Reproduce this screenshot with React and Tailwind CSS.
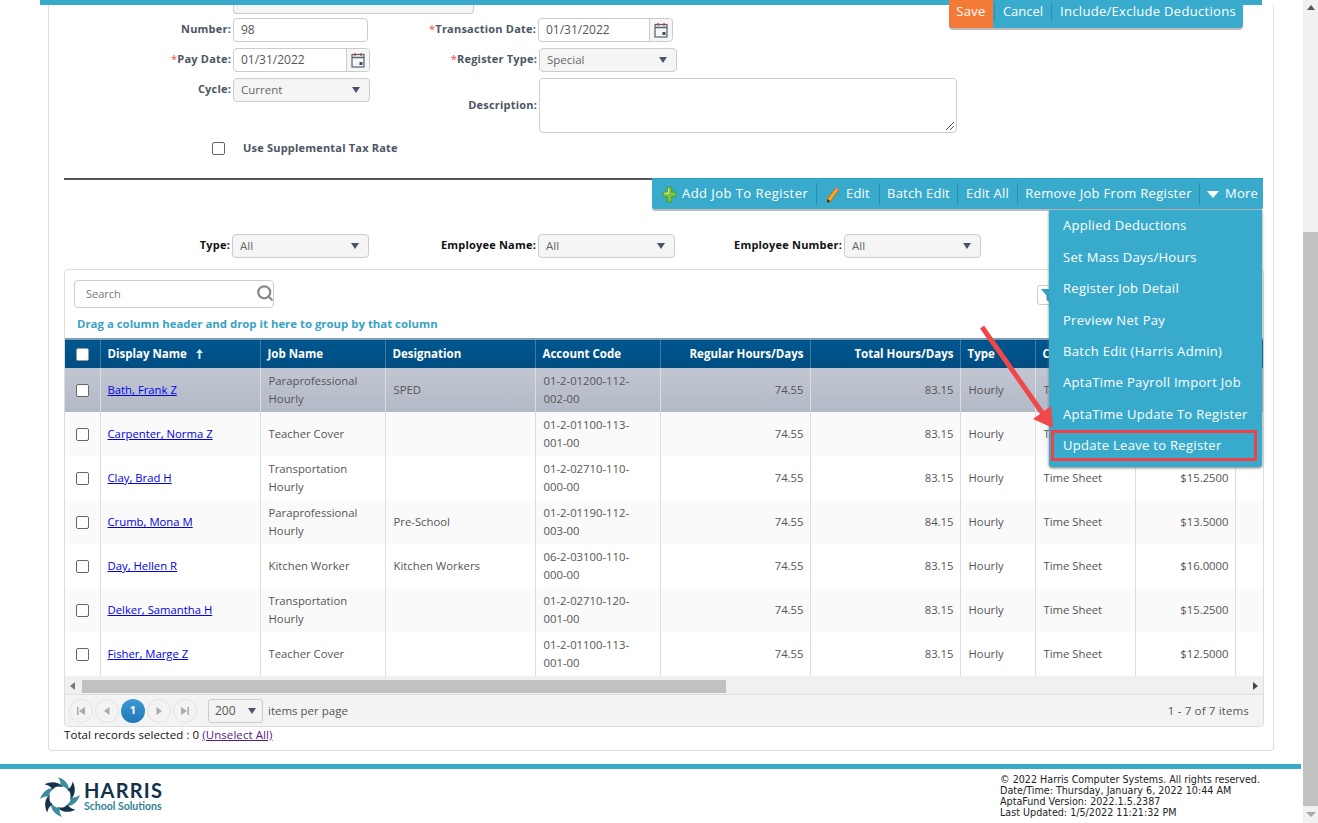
import { Search } from "lucide-react";

const rows = [
  { name: "Bath, Frank Z", job: "Paraprofessional Hourly", des: "SPED", acct: "01-2-01200-112-002-00", reg: "74.55", total: "83.15", rate: "" },
  { name: "Carpenter, Norma Z", job: "Teacher Cover", des: "", acct: "01-2-01100-113-001-00", reg: "74.55", total: "83.15", rate: "" },
  { name: "Clay, Brad H", job: "Transportation Hourly", des: "", acct: "01-2-02710-110-000-00", reg: "74.55", total: "83.15", rate: "$15.2500" },
  { name: "Crumb, Mona M", job: "Paraprofessional Hourly", des: "Pre-School", acct: "01-2-01190-112-003-00", reg: "74.55", total: "84.15", rate: "$13.5000" },
  { name: "Day, Hellen R", job: "Kitchen Worker", des: "Kitchen Workers", acct: "06-2-03100-110-000-00", reg: "74.55", total: "83.15", rate: "$16.0000" },
  { name: "Delker, Samantha H", job: "Transportation Hourly", des: "", acct: "01-2-02710-120-001-00", reg: "74.55", total: "83.15", rate: "$15.2500" },
  { name: "Fisher, Marge Z", job: "Teacher Cover", des: "", acct: "01-2-01100-113-001-00", reg: "74.55", total: "83.15", rate: "$12.5000" },
];

const menu = [
  "Applied Deductions",
  "Set Mass Days/Hours",
  "Register Job Detail",
  "Preview Net Pay",
  "Batch Edit (Harris Admin)",
  "AptaTime Payroll Import Job",
  "AptaTime Update To Register",
];

function Caret() {
  return <span className="w-0 h-0 border-x-[4px] border-x-transparent border-t-[6px] border-t-[#4a5568]" />;
}

function Calendar() {
  return (
    <svg width="14" height="16" viewBox="0 0 14 16" fill="none">
      <rect x="1" y="2.5" width="12" height="12.5" stroke="#56606e" strokeWidth="1.2" />
      <path d="M1 5.5h12" stroke="#56606e" strokeWidth="1.5" />
      <path d="M4 1v3M10 1v3" stroke="#c0504d" strokeWidth="1.4" />
      <rect x="8.5" y="10" width="3" height="3" fill="#3f4a58" />
    </svg>
  );
}

function Label({ children, req, w, black }) {
  return (
    <label className={`flex justify-end shrink-0 whitespace-nowrap font-bold text-[11px] tracking-[0.2px] leading-6 -mt-[1px] h-6 ${black ? "text-[#111]" : "text-[#4b5563]"} ${w || ""}`}>
      {req && <span className="text-[#ef4444] font-normal">*</span>}
      {children}
    </label>
  );
}

function Text({ value, w }) {
  return <div className={`h-6 ${w} border border-[#ccc] rounded-[4px] bg-white px-[7px] text-[12px] leading-[22px] text-[#555]`}>{value}</div>;
}

function DateBox({ value, w }) {
  return (
    <div className={`h-6 ${w} flex border border-[#ccc] rounded-[4px] bg-white text-[12px] leading-[22px] text-[#555]`}>
      <div className="flex-1 px-[7px]">{value}</div>
      <div className="w-[23px] flex items-center justify-center border-l border-[#ccc] bg-[#f6f6f6] rounded-r-[4px]"><Calendar /></div>
    </div>
  );
}

function Select({ value, w = "w-[137px]" }) {
  return (
    <div className={`h-6 ${w} flex items-center justify-between border border-[#ccc] rounded-[4px] bg-[#f5f5f5] pl-[7px] pr-[9px] text-[11.5px] text-[#666]`}>
      <span>{value}</span>
      <Caret />
    </div>
  );
}

function Sep() {
  return <span className="w-px h-[22px] bg-[#2c8fae]" />;
}

function Plus() {
  return (
    <svg width="15" height="17" viewBox="0 0 15 17">
      <path d="M5.2 1h4.6v5h4.2v4.6H9.800v5.400H5.200v-5.400H1V6h4.200z" fill="#7cc242" stroke="#4f9a2a" strokeWidth="1" />
      <path d="M6.500 2.500v4.800H2.500" fill="none" stroke="#c4ea9c" strokeWidth="1.200" />
    </svg>
  );
}

function Pencil() {
  return (
    <svg width="14" height="17" viewBox="0 0 14 17">
      <path d="M10 1.500l3 2L5 15l-3.800 1.500L1.500 12.500z" fill="#f5a623" stroke="#a8641a" strokeWidth="0.800" />
      <path d="M10 1.500l3 2-1 1.500-3-2z" fill="#e58a8a" />
      <path d="M1.500 13l-.3 3.500 3-1.200z" fill="#222" />
    </svg>
  );
}

function PagerBtn({ d }) {
  return (
    <span className="w-[24px] h-[24px] rounded-full border border-[#e2e2e2] flex items-center justify-center">
      <svg width="10" height="10" viewBox="0 0 10 10" fill="#aaa"><path d={d} /></svg>
    </span>
  );
}

function Logo() {
  const blades = [0, 45, 90, 135, 180, 225, 270, 315];
  return (
    <svg width="40" height="40" viewBox="-20 -20 40 40">
      {blades.map((a, i) => (
        <path
          key={a}
          transform={`rotate(${a})`}
          d="M-2 -20 C4 -18 10 -13 9 -5 C7 -9 4 -11 0 -11 C1 -14 0 -17 -2 -20z"
          fill={i % 2 ? "#14324a" : "#3d8b9e"}
        />
      ))}
    </svg>
  );
}

export default function App() {
  return (
    <div className="relative flex h-[823px] overflow-hidden bg-white font-['Open_Sans',sans-serif] text-[12px] text-[#555]">
      <div className="w-[1301px] shrink-0 flex flex-col">
        <div className="ml-10 w-[1222px] h-[5px] shrink-0 bg-[#38abcd]" />

        <div className="relative ml-12 w-[1226px] h-[746px] shrink-0 border-x border-b border-[#ddd] rounded-b-[4px] pl-[15px] pr-[9px]">
          <div className="absolute -top-[5px] left-[900px] flex items-stretch h-[28px] pb-[5px] text-[13px] tracking-[0.3px] text-white bg-[#38abcd] rounded-b-[4px] shadow-[0_2px_0_#bbb]">
            <span className="-mb-[5px] pb-[5px] w-[44px] flex items-center justify-center bg-[#f47a38] rounded-bl-[4px]">Save</span>
            <span className="w-[58px] flex items-center justify-center border-x border-[#2c8fae] ml-px my-[2px] tracking-normal">Cancel</span>
            <span className="w-[191px] flex items-center justify-center pl-[1px]">Include/Exclude Deductions</span>
          </div>

          <div className="-ml-[15px]">
            <div className="ml-[184px] w-[241px] h-[9px] border-x border-b border-[#ccc] rounded-b-[4px] bg-[#f5f5f5]" />

            <div className="flex mt-1">
              <Label w="w-[182px] mr-[2px]">Number:</Label>
              <div className="flex justify-between w-[305px]">
                <Text value="98" w="w-[135px]" />
                <Label req w="pr-[2px]">Transaction Date:</Label>
              </div>
              <DateBox value="01/31/2022" w="w-[135px]" />
            </div>

            <div className="flex mt-[6px]">
              <Label req w="w-[182px] mr-[2px]">Pay Date:</Label>
              <div className="flex justify-between w-[306px]">
                <DateBox value="01/31/2022" w="w-[137px]" />
                <Label req w="pr-[2px]">Register Type:</Label>
              </div>
              <Select value="Special" w="w-[138px]" />
            </div>

            <div className="flex h-[55px] mt-[6px]">
              <Label w="w-[182px] mr-[2px]">Cycle:</Label>
              <div className="flex justify-between w-[306px]">
                <Select value="Current" />
                <div className="self-center"><Label w="pr-[2px]">Description:</Label></div>
              </div>
              <div className="relative w-[418px] border border-[#ccc] rounded-[4px]">
                <svg className="absolute right-[1px] bottom-[1px]" width="10" height="10" viewBox="0 0 10 10" stroke="#555" strokeWidth="1">
                  <path d="M1 9l8-8M5 9l4-4" />
                </svg>
              </div>
            </div>

            <div className="flex items-center h-[13px] mt-[9px] ml-[163px]">
              <span className="w-[13px] h-[13px] border border-[#666] rounded-[2px] bg-white" />
              <span className="ml-[18px] font-bold text-[11px] tracking-[0.2px] text-[#4b5563]">Use Supplemental Tax Rate</span>
            </div>
          </div>

          <div className="flex h-[31px] mt-[23px] mr-[1px]">
            <div className="flex-1 h-[2px] bg-[#555]" />
            <div className="relative w-[611px] flex items-center text-[13px] tracking-[0.2px] text-white bg-[#38abcd] rounded-b-[3px] shadow-[0_2px_0_#bbb] border-t border-[#2c9fc2]">
              <span className="ml-[10px] flex items-center gap-[5px] w-[154px] tracking-[0.45px]"><Plus />Add Job To Register</span>
              <Sep />
              <span className="ml-[9px] flex items-center gap-[6px] w-[53px]"><Pencil />Edit</span>
              <Sep />
              <span className="w-[77px] text-center">Batch Edit</span>
              <Sep />
              <span className="w-[59px] text-center">Edit All</span>
              <Sep />
              <span className="w-[181px] text-center tracking-[0.3px]">Remove Job From Register</span>
              <Sep />
              <span className="ml-[7px] flex items-center gap-[6px]">
                <span className="w-0 h-0 border-x-[6px] border-x-transparent border-t-[7px] border-t-white" />
                More
              </span>

              <div className="absolute z-20 top-[31px] left-[397px] w-[213px] h-[257px] pt-[0.5px] px-[2px] bg-[#38abcd] rounded-b-[3px] shadow-[0_1px_3px_#777] text-[13px] tracking-[0.3px]">
                {menu.map((m) => (
                  <div key={m} className="h-[31.4px] flex items-center pl-3">{m}</div>
                ))}
                <div className="w-[206px] h-[31px] flex items-center pl-[9px] border-[3px] border-[#f04048]">Update Leave to Register</div>
              </div>
            </div>
          </div>

          <div className="flex h-6 mt-[25px]">
            <Label black w="w-[166px] mr-[2px]">Type:</Label>
            <Select value="All" />
            <Label black w="w-[167px] mr-[2px]">Employee Name:</Label>
            <Select value="All" />
            <Label black w="w-[167px] mr-[2px]">Employee Number:</Label>
            <Select value="All" />
          </div>

          <div className="mt-[11px] w-[1200px] h-[458px] flex flex-col border border-[#ddd] rounded-[4px] overflow-hidden">
            <div className="relative h-[68px] shrink-0 pl-[9px] pt-[10px]">
              <div className="relative w-[200px] h-[28px] border border-[#ccc] rounded-[4px] pl-[11px] text-[11px] leading-[26px] text-[#777]">
                Search
                <Search className="absolute right-[-1px] top-[3px] text-[#888]" size={18} strokeWidth={3} />
              </div>
              <div className="mt-[7px] ml-[3px] font-bold text-[11.4px] text-[#38a3c4]">Drag a column header and drop it here to group by that column</div>
              <div className="absolute left-[972px] top-[15px] w-[30px] h-[20px] border border-[#ccc] rounded-[3px] pl-[3px] pt-[2px]">
                <svg width="14" height="14" viewBox="0 0 14 14" fill="#2f9fc4"><path d="M0 1h14L8.500 7.500V14L5.500 12V7.500z" /></svg>
              </div>
            </div>

            <table className="table-fixed w-[1199px] border-collapse text-[11.3px] leading-[18px]">
              <colgroup>
                <col className="w-[35px]" />
                <col className="w-[160px]" />
                <col className="w-[125px]" />
                <col className="w-[150px]" />
                <col className="w-[125px]" />
                <col className="w-[150px]" />
                <col className="w-[150px]" />
                <col className="w-[75px]" />
                <col className="w-[100px]" />
                <col className="w-[100px]" />
                <col />
              </colgroup>
              <thead>
                <tr className="h-[29px] bg-linear-to-b from-[#00578e] to-[#004d82] text-white text-[11.5px] font-bold text-left border-t-2 border-[#7e9db4]">
                  <th className="border-r border-[#3f7ba3] text-center">
                    <span className="inline-block w-[13px] h-[13px] align-middle bg-white rounded-[2px] border border-[#999]" />
                  </th>
                  <th className="border-r border-[#3f7ba3] px-[7px]">
                    <span className="inline-flex items-center gap-[9px]">
                      Display Name
                      <svg width="7" height="10" viewBox="0 0 7 10"><path d="M3.500 0L7 4H4.500v6h-2V4H0z" fill="#cdeefa" /></svg>
                    </span>
                  </th>
                  <th className="border-r border-[#3f7ba3] px-[7px]">Job Name</th>
                  <th className="border-r border-[#3f7ba3] px-[7px]">Designation</th>
                  <th className="border-r border-[#3f7ba3] px-[7px]">Account Code</th>
                  <th className="border-r border-[#3f7ba3] pr-[6px] text-right">Regular Hours/Days</th>
                  <th className="border-r border-[#3f7ba3] pr-[6px] text-right">Total Hours/Days</th>
                  <th className="border-r border-[#3f7ba3] px-[7px]">Type</th>
                  <th className="border-r border-[#3f7ba3] px-[7px]">C</th>
                  <th className="border-r border-[#3f7ba3]" />
                  <th />
                </tr>
              </thead>
              <tbody>
                {rows.map((r, i) => (
                  <tr key={r.name} className={`h-[44px] ${i === 0 ? "bg-linear-to-b from-[#c1c6d2] to-[#b4b9c7]" : i % 2 ? "bg-[#fafafa]" : "bg-white"}`}>
                    <td className="border-r border-[#ddd] text-center">
                      <span className="inline-block w-[13px] h-[13px] align-middle bg-white rounded-[2px] border border-[#666]" />
                    </td>
                    <td className="border-r border-[#ddd] px-[7px]"><a className="text-[#0000ee] underline">{r.name}</a></td>
                    <td className="border-r border-[#ddd] pl-[8px] pr-[6px]">{r.job}</td>
                    <td className="border-r border-[#ddd] pl-[8px] pr-[6px]">{r.des}</td>
                    <td className="border-r border-[#ddd] pl-[8px] pr-[14px]">{r.acct}</td>
                    <td className="border-r border-[#ddd] pr-[6px] text-right">{r.reg}</td>
                    <td className="border-r border-[#ddd] pr-[6px] text-right">{r.total}</td>
                    <td className="border-r border-[#ddd] pl-[8px]">Hourly</td>
                    <td className="border-r border-[#ddd] pl-[8px]">Time Sheet</td>
                    <td className="border-r border-[#ddd] pr-[6px] text-right">{r.rate}</td>
                    <td />
                  </tr>
                ))}
              </tbody>
            </table>

            <div className="h-[18px] pt-[2px] shrink-0 flex items-center bg-[#f0f0f0] text-[#555]">
              <span className="w-0 h-0 ml-[5px] border-y-[4px] border-y-transparent border-r-[5px] border-r-[#777]" />
              <div className="ml-[7px] w-[644px] h-[13px] bg-[#c1c1c1]" />
              <span className="ml-auto mr-[5px] w-0 h-0 border-y-[4px] border-y-transparent border-l-[5px] border-l-[#444]" />
            </div>

            <div className="flex-1 flex items-center pl-[4px] pr-[14px] bg-[#f3f3f3] border-t border-[#ddd]">
              <div className="flex items-center gap-[2px]">
                <PagerBtn d="M1 1h1.500v8H1zM9 1v8L3 5z" />
                <PagerBtn d="M7.500 1v8L2 5z" />
                <span className="w-[24px] h-[24px] rounded-full bg-linear-to-b from-[#3a9ad4] to-[#1f78b8] text-white font-bold text-[11px] flex items-center justify-center">1</span>
                <PagerBtn d="M2.500 1v8L8 5z" />
                <PagerBtn d="M1 1v8l6-4zM7.500 1H9v8H7.500z" />
              </div>
              <div className="ml-[11px] w-[55px] h-[24px] flex items-center justify-between pl-[6px] pr-[6px] border border-[#ccc] rounded-[3px] text-[#555]">
                200 <Caret />
              </div>
              <span className="ml-[5px] text-[11.5px]">items per page</span>
              <span className="ml-auto text-[11.5px] tracking-[0.15px]">1 - 7 of 7 items</span>
            </div>
          </div>

          <div className="mt-[1px] text-[11.5px] tracking-[0.07px] leading-[14px] text-[#111]">
            Total records selected : 0 <a className="text-[#551a8b] underline">(Unselect All)</a>
          </div>
        </div>

        <div className="mt-[13px] h-[5px] shrink-0 bg-[#38abcd]" />

        <div className="flex justify-between pl-10 pt-[5px]">
          <div className="flex items-start mt-[3px]">
            <Logo />
            <div className="ml-[4px] text-[#14324a]">
              <div className="font-['Lato',sans-serif] font-bold text-[20px] leading-[20px] tracking-[1.2px] mt-[3px]">HARRIS</div>
              <div className="font-['Lato',sans-serif] font-bold text-[10.5px] leading-[12px] text-[#2f8396]">School Solutions</div>
            </div>
          </div>
          <div className="w-[301px] font-['DejaVu_Sans',sans-serif] text-[9.6px] leading-[11px] text-[#222]">
            <div>© 2022 Harris Computer Systems. All rights reserved.</div>
            <div>Date/Time: Thursday, January 6, 2022 10:44 AM</div>
            <div>AptaFund Version: 2022.1.5.2387</div>
            <div>Last Updated: 1/5/2022 11:21:32 PM</div>
          </div>
        </div>
      </div>

      <div className="ml-[2px] w-[15px] flex flex-col items-center bg-[#f1f1f1]">
        <span className="mt-[5px] w-0 h-0 border-x-[4px] border-x-transparent border-b-[5px] border-b-[#555]" />
        <div className="mt-[222px] w-full h-[574px] bg-[#c1c1c1]" />
        <span className="mt-[6px] w-0 h-0 border-x-[5px] border-x-transparent border-t-[5px] border-t-[#a8a8a8]" />
      </div>

      <svg className="absolute left-[975px] top-[320px] z-30 pointer-events-none" width="90" height="115" viewBox="0 0 90 115" fill="#f04848">
        <path d="M5 8.400L9 5.600L69 91.100L76 86L78 108L58 99L65 93.900z" />
      </svg>
    </div>
  );
}
